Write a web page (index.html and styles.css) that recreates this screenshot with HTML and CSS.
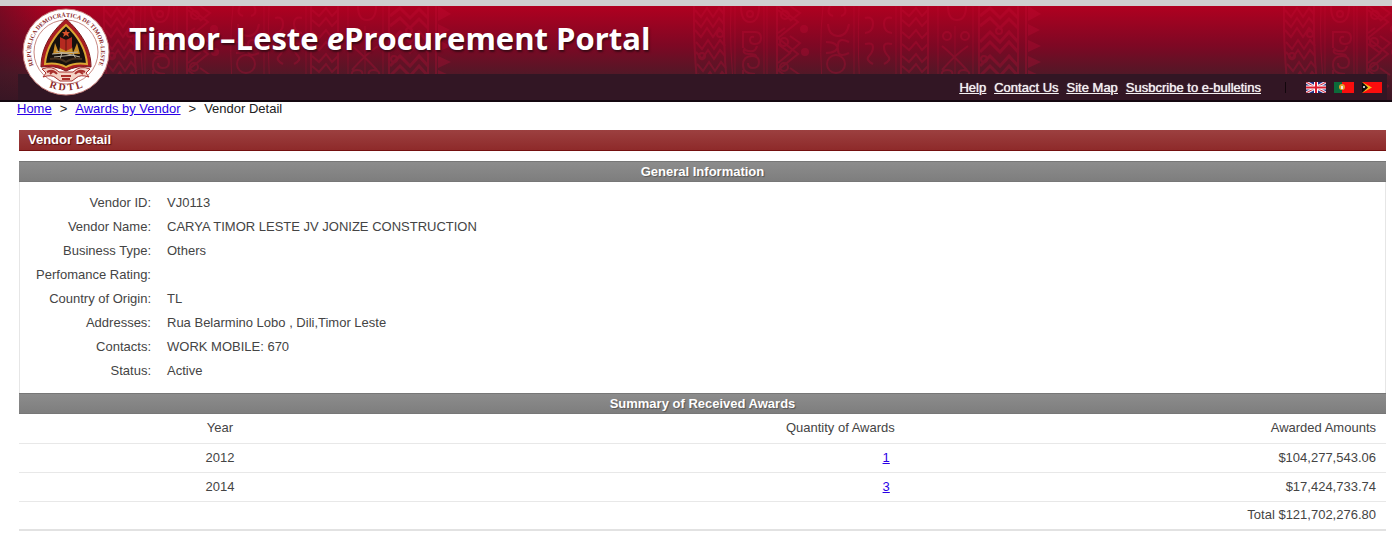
FILE: index.html
```html
<!DOCTYPE html>
<html lang="en">

<head>
    <meta charset="UTF-8">
    <meta name="viewport" content="width=device-width, initial-scale=1.0">
    <title>Timor-Leste eProcurement Portal</title>
    <link rel="stylesheet" href="styles.css">
</head>

<body>
    <header class="header">
        <svg class="header-pattern" aria-hidden="true">
            <defs>
                <pattern id="tais" x="103" y="0" width="590" height="96" patternUnits="userSpaceOnUse">
                    <g fill="none" stroke="#d0103c" stroke-width="2">
                        <!-- narrow zigzag band -->
                        <path d="M1 0 Q0 40 6 96 M31 0 Q30 50 36 96" />
                        <path d="M2 4 l6 7 6-9 6 9 6-9 5 6 M2 14 l6 7 6-9 6 9 6-9 5 6 M2 24 l6 7 6-9 6 9 6-9 5 6 M3 36 l6 7 6-9 6 9 6-9 5 6 M3 46 l6 7 6-9 6 9 6-9 5 6 M4 58 l6 7 6-9 6 9 6-9 5 6 M5 68 l6 7 6-9 6 9 6-9 5 6 M6 80 l6 7 6-9 6 9 6-9 5 6" />
                        <circle cx="9" cy="50" r="3" />
                        <circle cx="27" cy="28" r="3" />
                        <!-- spirals -->
                        <path d="M38 0 Q36 40 42 96 M42 0 V96 M71 0 V96 M74 0 V96" stroke-width="1" />
                        <path d="M48 0 q0 16 9 16 t9-16 M54 8 a3 3 0 1 0 6 0 a3 3 0 1 0-6 0 M50 42 V26 h12 q6 0 6 6 t-6 6 q-5 0-5-4 t4-3 M52 44 q10 4 12-4 M62 68 q-12 0-12-9 t9-9 q7 0 7 6 t-6 6 q-5 0-5-5 M52 42 q-4 6 4 6 t7 3 M50 64 v32" />
                        <!-- wide zigzag with seeds -->
                        <path d="M84 0 V96" />
                        <path d="M85 0 l20 16 -20 16 20 16 -20 16 20 16 -20 16 M85 4 l13 10 M92 22 l-7 5 M85 38 l12 9 -12 10 M97 0 l10 7 -10 8 M97 30 l10 7 -10 9 M97 62 l10 7" />
                        <g fill="#d0103c">
                            <circle cx="111" cy="23" r="3" />
                            <circle cx="112" cy="46" r="3" />
                        </g>
                        <circle cx="92" cy="9" r="4" />
                        <circle cx="91" cy="36" r="4" />
                        <circle cx="91" cy="61" r="4" />
                        <!-- rings -->
                        <path d="M130 0 Q125 45 131 96 M161 0 V96 M166 0 Q164 50 168 96 M203 0 V96" stroke-width="1" />
                        <path d="M137 0 q-4 8 3 10 M151 0 q4 8-3 10 M135 18 q1 12 10 12 t11-12 M133 36 q12 0 12 8 t11 3 M133 47 q12 0 12-8 t11-3" />
                        <circle cx="143" cy="58" r="9" />
                        <!-- figures -->
                        <path d="M172 12 q8-2 8 6 t-8 9 M172 38 q8-2 8 3 t-4 9 4 8 M199 12 q-8-2-8 6 t8 9 M199 38 q-8-2-8 3 t4 9 -4 8" />
                        <!-- second narrow band -->
                        <path d="M208 0 V96 M235 0 V96" />
                        <path d="M209 4 l7 6 7-8 6 8 6-6 M209 14 l7 6 7-8 6 8 6-6 M209 26 l7 6 7-8 6 8 6-6 M209 38 l7 6 7-8 6 8 6-6 M209 50 l7 6 7-8 6 8 6-6 M209 60 l7 6 7-8 6 8 6-6 M209 76 l7 6 7-8 6 8 6-6" />
                        <!-- crossing vines -->
                        <path d="M245 0 V96 M280 0 V96 M262 20 V96" stroke-width="1" />
                        <path d="M255 0 q0 14 9 14 t9-14 M250 30 a4 4 0 1 1 8 0 a4 4 0 1 1-8 0 M268 30 a4 4 0 1 1 8 0 a4 4 0 1 1-8 0 M249 40 q10 8 25 24 M275 40 q-12 8-26 24 M249 72 q-2-8 5-8 t5 6 M276 72 q2-8-5-8 t-5 6" />
                        <!-- main zigzag -->
                        <path d="M286 0 V96 M325 0 V96 M333 0 V96" />
                        <path d="M287 10 l10-8 10 10 9-9 9 9 M287 20 l10-8 10 10 9-9 9 9 M287 36 l10-10 10 10 9-10 9 10 M287 46 l10-10 10 10 9-10 9 10 M287 60 l10-10 10 10 9-10 9 10 M287 70 l10-10 10 10 9-10 9 10" stroke-width="3" />
                        <circle cx="291" cy="53" r="3" />
                        <circle cx="306" cy="25" r="3" />
                    </g>
                    <path d="M335 0 l13 8 -13 7 z M335 18 l12 6 -12 6 z M335 34 l13 6 -13 6 z M335 50 l13 6 -13 6 z M335 64 l13 6 -13 6 z" fill="#d0103c" />
                </pattern>
            </defs>
            <rect width="100%" height="100%" fill="url(#tais)" />
        </svg>

        <svg class="logo" viewBox="0 0 88 88" role="img" aria-label="República Democrática de Timor-Leste">
            <defs>
                <path id="ring" d="M14 62 A35 35 0 1 1 74 62" />
                <path id="ring-low" d="M24 78 Q44 87 64 78" />
            </defs>
            <circle cx="44" cy="44" r="43" fill="#fff" stroke="#c9807c" stroke-width="1" />
            <circle cx="44" cy="44" r="32" fill="none" stroke="#c98a84" stroke-width="1" />
            <text class="logo-text" text-anchor="middle"><textPath href="#ring" startOffset="50%">REPÚBLICA DEMOCRÁTICA DE TIMOR-LESTE</textPath></text>
            <text class="logo-text logo-low" text-anchor="middle"><textPath href="#ring-low" startOffset="50%">R D T L</textPath></text>
            <path d="M44 11 C29 24 19 40 19 59 Q33 57 44 63 Q55 57 69 59 C69 40 59 24 44 11 z" fill="#a81c22" stroke="#7a1418" stroke-width="1" />
            <path d="M44 17 C32 28 24 41 23 56 Q35 54 44 59 Q53 54 65 56 C64 41 56 28 44 17 z" fill="#17100d" stroke="#dba634" stroke-width="2" />
            <path d="M31 46 L33 35 L37 45 L39 32 H49 L51 45 L55 35 L58 46 z" fill="#c88c25" />
            <path d="M38 29 L44 32 L50 29 V40 L44 43 L38 40 z" fill="#b52a20" />
            <path d="M44 21 l1 3 h3 l-2 2 1 3 -3-2 -3 2 1-3 -2-2 h3 z" fill="#d9532c" />
            <path d="M44 31 V43" stroke="#631410" stroke-width="1" />
            <path d="M30 46 L56 44 M34 43 L58 49 M32 49 L52 47 M40 44 L38 52 M51 45 L54 51" stroke="#b9b2a2" stroke-width="1" />
            <path d="M28 51 Q37 49 44 54 Q51 49 60 51" fill="none" stroke="#46301d" stroke-width="2" />
            <path d="M20 61 Q30 57 37 64 H51 Q58 57 68 61 L64 65 L67 69 Q58 66 54 70 L50 73 H38 L34 70 Q30 66 21 69 L24 65 z" fill="#f4d3c7" stroke="#a9302d" stroke-width="1" />
            <path d="M25 64 q6-3 10 2 M53 66 q4-5 10-2 M39 68 h10 M40 71 h8 M28 66 l3-3 M57 63 l4 3" fill="none" stroke="#a9302d" stroke-width="2" />
        </svg>

        <h1 class="title">Timor–Leste <em>e</em>Procurement Portal</h1>

        <nav class="topnav">
            <a href="#">Help</a>
            <a href="#">Contact Us</a>
            <a href="#">Site Map</a>
            <a href="#">Susbcribe to e-bulletins</a>
            <span class="divider"></span>
            <div class="flags">
                <a href="#" aria-label="English">
                    <svg viewBox="0 0 20 11">
                        <rect width="20" height="11" fill="#1f2f86" />
                        <path d="M0 0 L20 11 M20 0 L0 11" stroke="#e8e4ee" stroke-width="3" />
                        <path d="M0 0 L20 11 M20 0 L0 11" stroke="#d8283c" stroke-width="1" />
                        <path d="M10 0 V11 M0 5.500 H20" stroke="#fff" stroke-width="4" />
                        <path d="M10 0 V11 M0 5.500 H20" stroke="#dc1c30" stroke-width="2" />
                    </svg>
                </a>
                <a href="#" aria-label="Português">
                    <svg viewBox="0 0 20 11">
                        <rect width="20" height="11" fill="#fb0d0d" />
                        <rect width="8" height="11" fill="#0c6b3a" />
                        <circle cx="8" cy="5" r="3" fill="#e3a02c" />
                        <rect x="7" y="4" width="2" height="3" fill="#f3e6e0" />
                    </svg>
                </a>
                <a href="#" aria-label="Tetum">
                    <svg viewBox="0 0 20 11">
                        <rect width="20" height="11" fill="#fb0d0d" />
                        <path d="M0 0 L10 5.500 L0 11 z" fill="#f4bd22" />
                        <path d="M0 0 L6 5.500 L0 11 z" fill="#0b0b0b" />
                        <circle cx="2" cy="5" r="1" fill="#fff" />
                    </svg>
                </a>
            </div>
        </nav>
    </header>

    <nav class="breadcrumb">
        <a href="#">Home</a>
        <span>&gt;</span>
        <a href="#">Awards by Vendor</a>
        <span>&gt;</span>
        <span>Vendor Detail</span>
    </nav>

    <main class="content">
        <h2 class="page-title">Vendor Detail</h2>

        <h3 class="section-title">General Information</h3>
        <div class="general">
            <table class="info">
                <tr><th>Vendor ID:</th><td>VJ0113</td></tr>
                <tr><th>Vendor Name:</th><td>CARYA TIMOR LESTE JV JONIZE CONSTRUCTION</td></tr>
                <tr><th>Business Type:</th><td>Others</td></tr>
                <tr><th>Perfomance Rating:</th><td></td></tr>
                <tr><th>Country of Origin:</th><td>TL</td></tr>
                <tr><th>Addresses:</th><td>Rua Belarmino Lobo , Dili,Timor Leste</td></tr>
                <tr><th>Contacts:</th><td>WORK MOBILE: 670</td></tr>
                <tr><th>Status:</th><td>Active</td></tr>
            </table>
        </div>

        <h3 class="section-title">Summary of Received Awards</h3>
        <table class="awards">
            <thead>
                <tr>
                    <th class="year">Year</th>
                    <th class="quantity">Quantity of Awards</th>
                    <th class="amount">Awarded Amounts</th>
                </tr>
            </thead>
            <tbody>
                <tr>
                    <td class="year">2012</td>
                    <td class="quantity"><a href="#">1</a></td>
                    <td class="amount">$104,277,543.06</td>
                </tr>
                <tr>
                    <td class="year">2014</td>
                    <td class="quantity"><a href="#">3</a></td>
                    <td class="amount">$17,424,733.74</td>
                </tr>
                <tr class="total">
                    <td class="amount" colspan="3">Total $121,702,276.80</td>
                </tr>
            </tbody>
        </table>
    </main>
</body>

</html>
```
FILE: styles.css
```css
* {
    margin: 0;
    padding: 0;
    box-sizing: border-box;
}

body {
    background-color: #fff;
    border-top: 6px solid #cfcfcf;
    font-family: "Liberation Sans", Arial, Helvetica, sans-serif;
    font-size: 13px;
    line-height: 16px;
    color: #444;
}

a {
    color: #2a00e6;
}

.header {
    position: relative;
    background: linear-gradient(to right, rgba(50, 22, 36, 0.4), rgba(50, 22, 36, 0) 50px),
        linear-gradient(#b00020, #7d0824 40px, #521827 68px, #3c1624);
    border-bottom: 2px solid #140810;
}

.header-pattern {
    position: absolute;
    top: 0;
    left: 0;
    width: 100%;
    height: 100%;
    opacity: 0.24;
}

.logo {
    position: absolute;
    top: 2px;
    left: 22px;
    z-index: 1;
    width: 88px;
    height: 88px;
}

.logo-text {
    font-family: "Liberation Serif", "Times New Roman", serif;
    font-size: 6px;
    font-weight: bold;
    fill: #8c2a2a;
}

.logo-low {
    font-size: 10px;
}

.title {
    position: relative;
    height: 68px;
    padding-left: 129px;
    font-family: "Open Sans", "Noto Sans", sans-serif;
    font-size: 31px;
    line-height: 64px;
    font-weight: bold;
    color: #fff;
    text-shadow: 1px 2px 2px #3a0a16;
    white-space: nowrap;
}

.topnav {
    position: relative;
    display: flex;
    justify-content: flex-end;
    align-items: center;
    gap: 8px;
    height: 26px;
    margin: 0 5px 0 18px;
    padding: 1px 5px 0 0;
    background-color: #321624;
}

.topnav a {
    color: #f4f0f2;
    text-shadow: 0 0 1px #fff;
}

.divider {
    width: 1px;
    height: 11px;
    margin: 0 12px 0 16px;
    background-color: #12060c;
}

.flags {
    display: flex;
    gap: 8px;
}

.flags svg {
    display: block;
    width: 20px;
    height: 11px;
}

.breadcrumb {
    display: flex;
    gap: 8px;
    padding: 0 17px;
    line-height: 14px;
    color: #222;
}

.content {
    margin: 14px 6px 0 19px;
}

.page-title,
.section-title {
    height: 21px;
    font-size: 13px;
    line-height: 20px;
    color: #fff;
}

.page-title {
    margin-bottom: 10px;
    padding-left: 9px;
    background: linear-gradient(#9c4040, #8e2a2a);
    border-bottom: 1px solid #74100f;
    text-shadow: 1px 1px 1px #5a1010;
}

.section-title {
    background: linear-gradient(#8c8c8c, #7e7e7e);
    border: 1px solid #777;
    border-width: 1px 0;
    text-align: center;
    text-shadow: 1px 1px 1px #555;
}

.general {
    padding: 9px 0 10px;
    border: 1px solid #e6e6e6;
    border-width: 0 1px;
}

.info,
.awards {
    border-collapse: collapse;
}

.info th {
    width: 131px;
    height: 24px;
    font-weight: normal;
    text-align: right;
}

.info td {
    padding-left: 16px;
}

.awards {
    width: 100%;
    table-layout: fixed;
}

.awards th,
.awards td {
    height: 29px;
    padding: 0 10px;
    border-bottom: 1px solid #e8e8e8;
    font-weight: normal;
}

.awards .year {
    width: 29.4%;
    text-align: center;
}

.awards .quantity {
    width: 35.4%;
    text-align: right;
}

.awards td.quantity {
    padding-right: 15px;
}

.awards .amount {
    text-align: right;
}

.awards .total td {
    border-bottom: 2px solid #e2e2e2;
}
```
